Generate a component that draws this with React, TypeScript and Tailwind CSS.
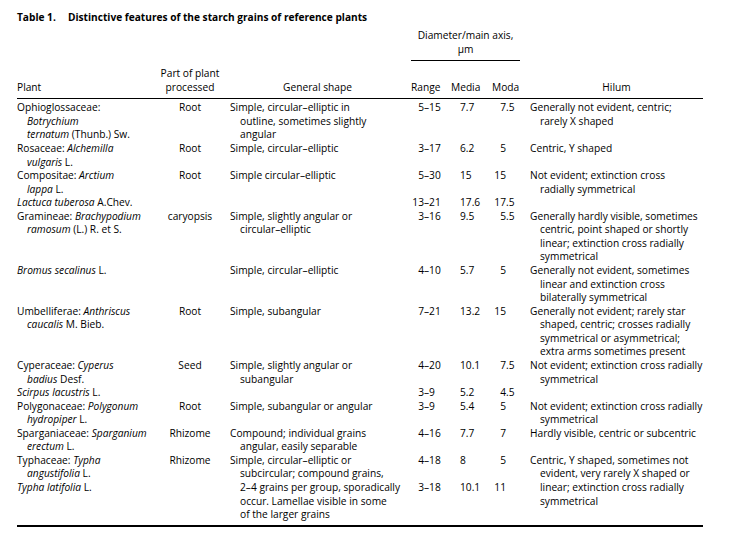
import React from 'react';

type Line = React.ReactNode;

type Row = {
  plant: Line[][]; // entries, each entry is a list of lines (first flush, rest indented)
  part?: string;
  shape: string[];
  range: string[];
  media: string[];
  moda: string[];
  hilum: string[];
};

const I = ({ children }: { children: React.ReactNode }) => <i>{children}</i>;

const rows: Row[] = [
  {
    plant: [['Ophioglossaceae:', <I>Botrychium</I>, <><I>ternatum</I> (Thunb.) Sw.</>]],
    part: 'Root',
    shape: ['Simple, circular–elliptic in', 'outline, sometimes slightly', 'angular'],
    range: ['5–15'],
    media: ['7.7'],
    moda: ['7.5'],
    hilum: ['Generally not evident, centric;', 'rarely X shaped'],
  },
  {
    plant: [[<>Rosaceae: <I>Alchemilla</I></>, <><I>vulgaris</I> L.</>]],
    part: 'Root',
    shape: ['Simple, circular–elliptic'],
    range: ['3–17'],
    media: ['6.2'],
    moda: ['5'],
    hilum: ['Centric, Y shaped'],
  },
  {
    plant: [[<>Compositae: <I>Arctium</I></>, <><I>lappa</I> L.</>]],
    part: 'Root',
    shape: ['Simple circular–elliptic'],
    range: ['5–30'],
    media: ['15'],
    moda: ['15'],
    hilum: ['Not evident; extinction cross', 'radially symmetrical'],
  },
  {
    plant: [[<><I>Lactuca tuberosa</I> A.Chev.</>]],
    shape: [],
    range: ['13–21'],
    media: ['17.6'],
    moda: ['17.5'],
    hilum: [],
  },
  {
    plant: [[<>Gramineae: <I>Brachypodium</I></>, <><I>ramosum</I> (L.) R. et S.</>]],
    part: 'caryopsis',
    shape: ['Simple, slightly angular or', 'circular–elliptic'],
    range: ['3–16'],
    media: ['9.5'],
    moda: ['5.5'],
    hilum: [
      'Generally hardly visible, sometimes',
      'centric, point shaped or shortly',
      'linear; extinction cross radially',
      'symmetrical',
    ],
  },
  {
    plant: [[<><I>Bromus secalinus</I> L.</>]],
    shape: ['Simple, circular–elliptic'],
    range: ['4–10'],
    media: ['5.7'],
    moda: ['5'],
    hilum: ['Generally not evident, sometimes', 'linear and extinction cross', 'bilaterally symmetrical'],
  },
  {
    plant: [[<>Umbelliferae: <I>Anthriscus</I></>, <><I>caucalis</I> M. Bieb.</>]],
    part: 'Root',
    shape: ['Simple, subangular'],
    range: ['7–21'],
    media: ['13.2'],
    moda: ['15'],
    hilum: [
      'Generally not evident; rarely star',
      'shaped, centric; crosses radially',
      'symmetrical or asymmetrical;',
      'extra arms sometimes present',
    ],
  },
  {
    plant: [[<>Cyperaceae: <I>Cyperus</I></>, <><I>badius</I> Desf.</>]],
    part: 'Seed',
    shape: ['Simple, slightly angular or', 'subangular'],
    range: ['4–20'],
    media: ['10.1'],
    moda: ['7.5'],
    hilum: ['Not evident; extinction cross radially', 'symmetrical'],
  },
  {
    plant: [[<><I>Scirpus lacustris</I> L.</>]],
    shape: [],
    range: ['3–9'],
    media: ['5.2'],
    moda: ['4.5'],
    hilum: [],
  },
  {
    plant: [[<>Polygonaceae: <I>Polygonum</I></>, <><I>hydropiper</I> L.</>]],
    part: 'Root',
    shape: ['Simple, subangular or angular'],
    range: ['3–9'],
    media: ['5.4'],
    moda: ['5'],
    hilum: ['Not evident; extinction cross radially', 'symmetrical'],
  },
  {
    plant: [[<>Sparganiaceae: <I>Sparganium</I></>, <><I>erectum</I> L.</>]],
    part: 'Rhizome',
    shape: ['Compound; individual grains', 'angular, easily separable'],
    range: ['4–16'],
    media: ['7.7'],
    moda: ['7'],
    hilum: ['Hardly visible, centric or subcentric'],
  },
  {
    plant: [[<>Typhaceae: <I>Typha</I></>, <><I>angustifolia</I> L.</>], [<><I>Typha latifolia</I> L.</>]],
    part: 'Rhizome',
    shape: [
      'Simple, circular–elliptic or',
      'subcircular; compound grains,',
      '2–4 grains per group, sporadically',
      'occur. Lamellae visible in some',
      'of the larger grains',
    ],
    range: ['4–18', '', '3–18'],
    media: ['8', '', '10.1'],
    moda: ['5', '', '11'],
    hilum: [
      'Centric, Y shaped, sometimes not',
      'evident, very rarely X shaped or',
      'linear; extinction cross radially',
      'symmetrical',
    ],
  },
];

// shared column template: Plant | Part | Shape | Range | Media | Moda | Hilum
const cols = 'grid grid-cols-[143px_60px_185px_45px_35px_40px_178px]';

function Hanging({ lines }: { lines: Line[] }) {
  return (
    <div>
      {lines.map((l, i) => (
        <div key={i} className={i > 0 ? 'pl-[10px]' : ''}>
          {l}
        </div>
      ))}
    </div>
  );
}

function Range({ v }: { v: string }) {
  if (!v) return <div>&nbsp;</div>;
  const [a, b] = v.split('–');
  return (
    <div className="flex">
      <span className="inline-block w-[19px] text-right">{a}</span>
      <span>–{b}</span>
    </div>
  );
}

function Moda({ v }: { v: string }) {
  if (!v) return <div>&nbsp;</div>;
  const [a, b] = v.split('.');
  return (
    <div className="flex">
      <span className="inline-block w-[21px] text-right">{a}</span>
      {b && <span>.{b}</span>}
    </div>
  );
}

export default function App() {
  return (
    <div className="min-h-screen w-[730px] bg-white font-['Open_Sans',sans-serif] text-[10.2px] leading-[13.57px] text-black">
      <div className="pl-[17px] pt-[10px]">
        {/* Título */}
        <h1 className="flex text-[10.15px] font-bold leading-[14px]">
          <span className="w-[51px]">Table 1.</span>
          <span>Distinctive features of the starch grains of reference plants</span>
        </h1>

        {/* Cabecera */}
        <div className={`${cols} mt-[5px]`}>
          <div className="col-start-4 col-span-3 ml-[6px] mr-[5px] border-b-[1.5px] border-black pb-[4px] text-center">
            <div>Diameter/main axis,</div>
            <div>μm</div>
          </div>
        </div>
        <div className={`${cols} mt-[6px] items-end`}>
          <div>Plant</div>
          <div className="text-center">
            <div>Part of plant</div>
            <div>processed</div>
          </div>
          <div className="pl-[10px] text-center">General shape</div>
          <div className="pl-[6px]">Range</div>
          <div className="pl-[1px]">Media</div>
          <div className="pl-[7px]">Moda</div>
          <div className="pl-[5px] text-center">Hilum</div>
        </div>
        <div className="mt-[3.5px] h-[1.5px] w-[686px] bg-black" />

        {/* Filas */}
        <div className="pt-[2px]">
          {rows.map((r, i) => (
            <div key={i} className={cols}>
              <div>
                {r.plant.map((e, j) => (
                  <Hanging key={j} lines={e} />
                ))}
              </div>
              <div className="text-center">{r.part}</div>
              <div className="pl-[10px]">
                <Hanging lines={r.shape} />
              </div>
              <div>
                {r.range.map((v, j) => (
                  <Range key={j} v={v} />
                ))}
              </div>
              <div className="pl-[10px]">
                {r.media.map((v, j) => (
                  <div key={j}>{v || '\u00a0'}</div>
                ))}
              </div>
              <div>
                {r.moda.map((v, j) => (
                  <Moda key={j} v={v} />
                ))}
              </div>
              <div className="pl-[5px]">
                <Hanging lines={r.hilum} />
              </div>
            </div>
          ))}
        </div>
        <div className="mt-[3.5px] h-[1.5px] w-[686px] bg-black" />
      </div>
    </div>
  );
}
